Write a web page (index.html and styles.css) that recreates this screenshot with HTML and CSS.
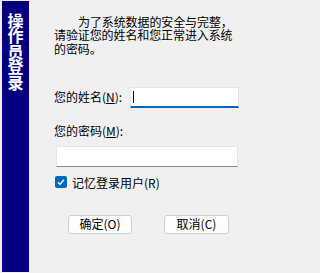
FILE: index.html
```html
<!DOCTYPE html>
<html lang="zh-CN">
<head>
<meta charset="utf-8">
<link rel="stylesheet" href="styles.css">
</head>
<body>
<div class="dialog">
  <div class="side"><span class="side-title">操作员登录</span></div>
  <div class="main">
    <p class="intro">为了系统数据的安全与完整，请验证您的姓名和您正常进入系统的密码。</p>
    <div class="name-row">
      <label class="lbl">您的姓名(<u>N</u>):</label>
      <div class="input input-name"><span class="caret"></span></div>
    </div>
    <label class="lbl pw-lbl">您的密码(<u>M</u>):</label>
    <div class="input input-pw"></div>
    <div class="check-row">
      <span class="check">
        <svg width="12" height="12" viewBox="0 0 12 12"><path d="M3 6.2 L5 8.2 L9 3.8" fill="none" stroke="#fff" stroke-width="1.3"/></svg>
      </span>
      <span class="check-lbl">记忆登录用户(R)</span>
    </div>
    <div class="buttons">
      <button class="btn btn-ok">确定(O)</button>
      <button class="btn btn-cancel">取消(C)</button>
    </div>
  </div>
</div>
</body>
</html>
```
FILE: styles.css
```css
html, body {
  margin: 0;
  padding: 0;
  background: #f0f0f0;
}
body {
  font-family: "Noto Sans CJK SC", "Noto Sans", sans-serif;
  font-size: 12px;
  color: #000;
  width: 257px;
  height: 273px;
  overflow: hidden;
}
.dialog {
  display: flex;
  height: 273px;
}
.side {
  margin: 1px 0 1px 2px;
  width: 27px;
  height: 271px;
  background: #060080;
  display: flex;
  justify-content: center;
  padding-top: 12px;
  box-sizing: border-box;
}
.side-title {
  writing-mode: vertical-rl;
  color: #fff;
  font-weight: bold;
  font-size: 16px;
  line-height: 16px;
  letter-spacing: -0.6px;
  height: 80px;
}
.main {
  margin-left: 25px;
  width: 185px;
  display: flex;
  flex-direction: column;
}
.intro {
  margin: 15px 0 0 0;
  line-height: 13.3px;
  text-indent: 24px;
  letter-spacing: -0.1px;
}
.name-row {
  margin-top: 32px;
  display: flex;
  align-items: center;
  justify-content: space-between;
}
.lbl {
  line-height: 14px;
}
.lbl u {
  text-underline-offset: 1px;
}
.input {
  background: #fff;
  box-sizing: border-box;
  border: 1px solid #e5e5e5;
}
.input-name {
  width: 109px;
  height: 21px;
  border-bottom: 2px solid #0067c0;
  position: relative;
}
.caret {
  position: absolute;
  left: 2px;
  top: 3px;
  width: 1px;
  height: 12px;
  background: #000;
}
.pw-lbl {
  margin-top: 16px;
}
.input-pw {
  margin: 8px 1px 0 2px;
  height: 21px;
  border-bottom: 1px solid #8a8a8a;
}
.check-row {
  margin-top: 9px;
  display: flex;
  align-items: center;
  height: 13px;
}
.check {
  width: 12px;
  height: 12px;
  margin-left: 1px;
  background: #0067c0;
  border-radius: 2px;
  display: flex;
  align-items: center;
  justify-content: center;
}
.check svg {
  display: block;
}
.check-lbl {
  margin-left: 5px;
  line-height: 13px;
}
.buttons {
  margin-top: 26px;
  display: flex;
  padding-left: 14px;
  gap: 32px;
}
.btn {
  width: 64px;
  height: 19px;
  padding: 0;
  box-sizing: border-box;
  background: #fdfdfd;
  border: 1px solid #d0d0d0;
  border-radius: 3px;
  font-family: "Noto Sans CJK SC", "Noto Sans", sans-serif;
  font-size: 12px;
  line-height: 16px;
  color: #000;
}
.btn-cancel {
  width: 65px;
}
```
